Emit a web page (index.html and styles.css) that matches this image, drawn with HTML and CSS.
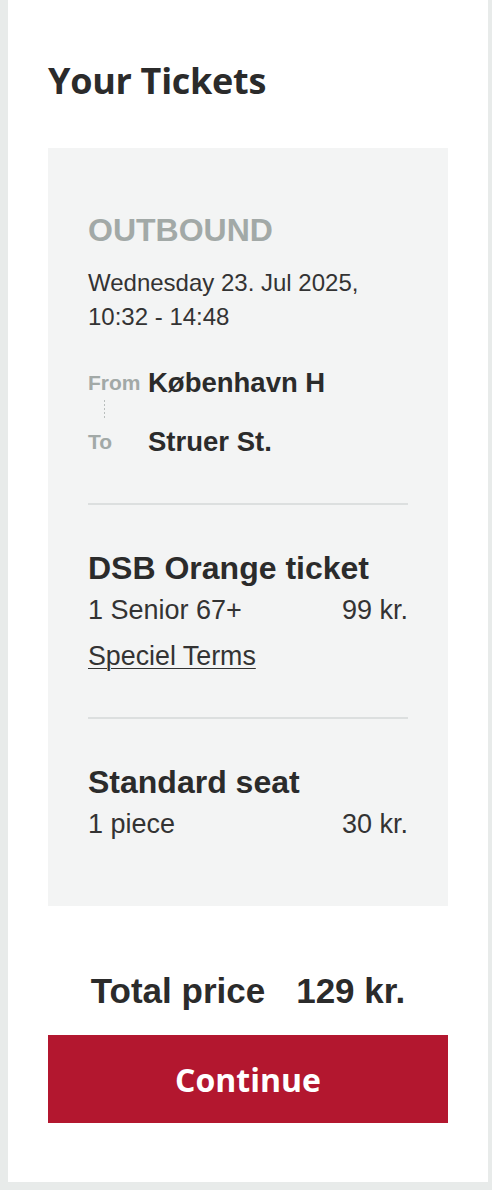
FILE: index.html
```html
<!DOCTYPE html>
<html lang="en">
<head>
<meta charset="utf-8">
<title>Your Tickets</title>
<link rel="stylesheet" href="styles.css">
</head>
<body>
<main class="panel">
  <h1 class="title">Your Tickets</h1>
  <section class="card">
    <div class="journey">
      <div class="direction">OUTBOUND</div>
      <div class="datetime">Wednesday 23. Jul 2025,<br>10:32 - 14:48</div>
      <div class="route">
        <span class="route-label">From</span>
        <span class="route-station">København H</span>
        <span class="route-connector"></span>
        <span></span>
        <span class="route-label">To</span>
        <span class="route-station">Struer St.</span>
      </div>
    </div>
    <div class="item">
      <div class="item-title">DSB Orange ticket</div>
      <div class="item-row"><span>1 Senior 67+</span><span>99 kr.</span></div>
      <a class="item-link" href="#">Speciel Terms</a>
    </div>
    <div class="item">
      <div class="item-title">Standard seat</div>
      <div class="item-row"><span>1 piece</span><span>30 kr.</span></div>
    </div>
  </section>
  <div class="total"><span>Total price</span><span>129 kr.</span></div>
  <button class="continue" type="button">Continue</button>
</main>
</body>
</html>
```

FILE: styles.css
```css
html, body {
  margin: 0;
  padding: 0;
}
body {
  background: #e8ebea;
  padding: 0 4px 8px 8px;
  font-family: "Liberation Sans", Arial, sans-serif;
  color: #2d2d2d;
}
.panel {
  background: #ffffff;
  padding: 59px 40px 59px;
  box-sizing: border-box;
  min-height: 1182px;
}
.title {
  margin: 0 0 45px;
  font-family: "Open Sans", sans-serif;
  font-weight: 700;
  font-size: 36px;
  line-height: 44px;
  color: #2b2b2b;
  letter-spacing: -0.3px;
}
.card {
  background: #f3f4f4;
  padding: 62px 40px 65px;
}
.journey {
  padding-bottom: 44px;
  border-bottom: 2px solid #dcdfdf;
}
.direction {
  font-weight: 700;
  font-size: 32px;
  line-height: 40px;
  color: #a2a9a7;
}
.datetime {
  margin-top: 16px;
  font-size: 24px;
  line-height: 34px;
  color: #333;
}
.route {
  margin-top: 32px;
  display: grid;
  grid-template-columns: 60px 1fr;
  grid-template-rows: 34px 25px 34px;
  align-items: center;
}
.route-label {
  font-weight: 700;
  font-size: 21px;
  color: #a2a9a7;
}
.route-station {
  font-weight: 700;
  font-size: 27.5px;
  color: #2b2b2b;
}
.route-connector {
  align-self: stretch;
  width: 1px;
  margin: 0 0 6px 16px;
  background: repeating-linear-gradient(to bottom, #b9bebd 0 2px, transparent 2px 4px);
}
.item {
  padding: 44px 0;
  border-bottom: 2px solid #dcdfdf;
}
.item:last-child {
  border-bottom: none;
  padding-bottom: 0;
}
.item-title {
  font-weight: 700;
  font-size: 32px;
  line-height: 38px;
  color: #2b2b2b;
}
.item-row {
  margin-top: 6px;
  display: flex;
  justify-content: space-between;
  font-size: 27px;
  line-height: 34px;
  color: #333;
}
.item-link {
  display: inline-block;
  margin-top: 12px;
  font-size: 26.8px;
  line-height: 34px;
  color: #333;
  text-decoration: underline;
  text-decoration-thickness: 1px;
  text-underline-offset: 3px;
}
.total {
  margin-top: 65px;
  display: flex;
  justify-content: center;
  gap: 31px;
  font-weight: 700;
  font-size: 35px;
  line-height: 40px;
  color: #2b2b2b;
}
.continue {
  display: block;
  width: 100%;
  margin-top: 24px;
  height: 88px;
  border: none;
  background: #b3172f;
  color: #fff;
  font-family: "Open Sans", sans-serif;
  font-weight: 700;
  font-size: 32px;
  cursor: pointer;
}
```
